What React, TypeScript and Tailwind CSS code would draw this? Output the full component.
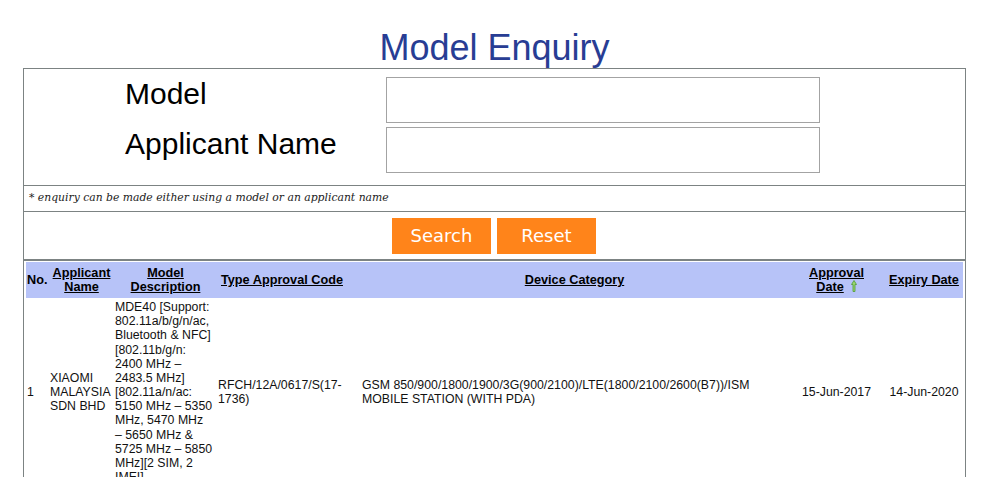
function SortArrow() {
  return (
    <svg width="6" height="12" viewBox="0 0 6 12" className="inline-block ml-[7px] align-[-1px]">
      <path d="M3 0.5 L5.5 4.5 L4 4.5 L4 11.5 L2 11.5 L2 4.5 L0.5 4.5 Z" fill="#9ad66f" stroke="#4f9a35" strokeWidth="0.8" />
    </svg>
  );
}

const modelLines = [
  "MDE40 [Support:",
  "802.11a/b/g/n/ac,",
  "Bluetooth & NFC]",
  "[802.11b/g/n:",
  "2400 MHz \u2013",
  "2483.5 MHz]",
  "[802.11a/n/ac:",
  "5150 MHz \u2013 5350",
  "MHz, 5470 MHz",
  "\u2013 5650 MHz &",
  "5725 MHz \u2013 5850",
  "MHz][2 SIM, 2",
  "IMEI]",
];

export default function App() {
  return (
    <div className="bg-white w-[984px] h-[477px] overflow-hidden font-[Liberation_Sans,Arial,sans-serif]">
      {/* Title */}
      <h1 className="pt-[27px] h-[68px] w-[943px] ml-[23px] text-center text-[36px] leading-[41px] text-[#283d94]">
        Model Enquiry
      </h1>

      <div className="ml-[23px] w-[943px] border border-[#7c8383]">
        {/* Form */}
        <div className="pt-[8px] pb-[12px] pl-[101px] grid grid-cols-[261px_434px] gap-y-[4px]">
          <label className="text-[30px] leading-[34px] text-black">Model</label>
          <input className="h-[46px] border border-[#a3a3a3] outline-none px-2" />
          <label className="text-[30px] leading-[34px] text-black">Applicant Name</label>
          <input className="h-[46px] border border-[#a3a3a3] outline-none px-2" />
        </div>

        {/* Note */}
        <div className="border-t border-[#7c8383] h-[26px] pl-[5px] flex items-center">
          <span className="font-[DejaVu_Serif,serif] italic text-[10.8px] text-[#222]">
            * enquiry can be made either using a model or an applicant name
          </span>
        </div>

        {/* Buttons */}
        <div className="border-t border-[#7c8383] h-[48px] flex justify-center items-center gap-[6px] pr-[1px]">
          <button className="w-[99px] h-[36px] bg-[#ff841a] text-white text-[18px] font-[DejaVu_Sans,Verdana,sans-serif]">
            Search
          </button>
          <button className="w-[99px] h-[36px] bg-[#ff841a] text-white text-[18px] font-[DejaVu_Sans,Verdana,sans-serif]">
            Reset
          </button>
        </div>

        {/* Results */}
        <div className="border-t-2 border-[#7c8383] pt-[1px] pl-[2px] pb-[4px]">
          <table className="table-fixed w-[937px] border-collapse text-[12.3px] leading-[14.17px] text-[#111]">
            <colgroup>
              <col className="w-[23px]" />
              <col className="w-[65px]" />
              <col className="w-[103px]" />
              <col className="w-[144px]" />
              <col className="w-[427px]" />
              <col className="w-[97px]" />
              <col className="w-[78px]" />
            </colgroup>
            <thead>
              <tr className="bg-[#b7c3f8] h-[36px] text-black text-[12.7px] leading-[14.4px]">
                <th className="px-[1px] text-left font-bold">No.</th>
                <th className="px-[1px] text-center font-bold underline">Applicant Name</th>
                <th className="px-[1px] text-center font-bold underline">Model Description</th>
                <th className="pl-[4px] text-left font-bold underline">Type Approval Code</th>
                <th className="px-[1px] text-center font-bold underline">Device Category</th>
                <th className="px-[1px] text-center font-bold">
                  <span className="underline">Approval</span>
                  <br />
                  <span className="underline">Date</span>
                  <SortArrow />
                </th>
                <th className="px-[1px] text-center font-bold underline">Expiry Date</th>
              </tr>
            </thead>
            <tbody>
              <tr className="align-middle">
                <td className="px-[1px] py-[2px]">1</td>
                <td className="px-[1px] py-[2px]">XIAOMI MALAYSIA SDN BHD</td>
                <td className="px-[1px] py-[2px] whitespace-nowrap">
                  {modelLines.map((line, i) => (
                    <div key={i}>{line}</div>
                  ))}
                </td>
                <td className="px-[1px] py-[2px]">RFCH/12A/0617/S(17-1736)</td>
                <td className="px-[1px] py-[2px]">
                  GSM 850/900/1800/1900/3G(900/2100)/LTE(1800/2100/2600(B7))/ISM MOBILE STATION (WITH PDA)
                </td>
                <td className="px-[1px] py-[2px] text-center">15-Jun-2017</td>
                <td className="px-[1px] py-[2px] text-center">14-Jun-2020</td>
              </tr>
            </tbody>
          </table>
        </div>
      </div>
    </div>
  );
}
